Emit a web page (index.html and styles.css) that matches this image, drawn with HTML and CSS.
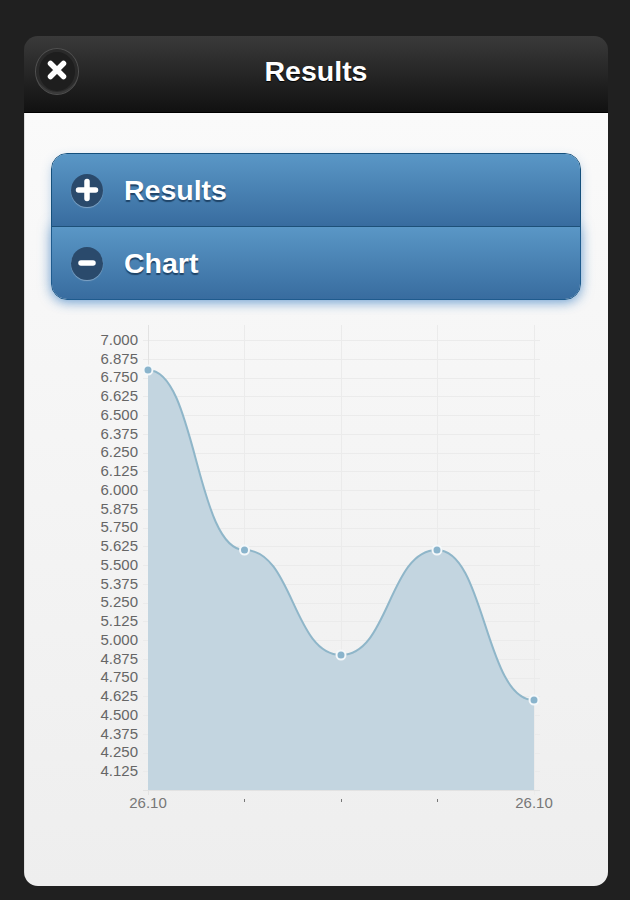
FILE: index.html
```html
<!DOCTYPE html>
<html lang="en">
<head>
  <meta charset="UTF-8" />
  <title>Results</title>
  <meta name="viewport" content="width=device-width, initial-scale=1.0" />
  <link rel="stylesheet" href="styles.css">
</head>
<body>
  <div class="dialog">
    <header class="dialog-header">
      <a class="close-btn" href="#" aria-label="Close">
        <svg class="close-icon" viewBox="0 0 24 24" width="24" height="24">
          <path d="M5.5 5.5 L18.5 18.5 M18.5 5.5 L5.5 18.5" />
        </svg>
      </a>
      <h1>Results</h1>
    </header>

    <div class="dialog-content">
      <div class="collapsible-set">
        <div class="collapsible-row">
          <span class="row-icon">
            <svg viewBox="0 0 24 24" width="24" height="24"><path d="M3.5 12 H20.5 M12 3.5 V20.5" /></svg>
          </span>
          <span class="row-title">Results</span>
        </div>
        <div class="collapsible-row">
          <span class="row-icon">
            <svg viewBox="0 0 24 24" width="24" height="24"><path d="M6 12 H18" /></svg>
          </span>
          <span class="row-title">Chart</span>
        </div>
      </div>

      <svg class="chart" viewBox="90 320 470 500" width="470" height="500">
        <g class="grid">
          <path d="M143 340.5H540 M143 359.5H540 M143 378.5H540 M143 396.5H540 M143 415.5H540 M143 434.5H540 M143 453.5H540 M143 471.5H540 M143 490.5H540 M143 509.5H540 M143 528.5H540 M143 546.5H540 M143 565.5H540 M143 584.5H540 M143 603.5H540 M143 621.5H540 M143 640.5H540 M143 659.5H540 M143 678.5H540 M143 696.5H540 M143 715.5H540 M143 734.5H540 M143 753.5H540 M143 771.5H540" />
          <path d="M244.5 325V790 M341.5 325V790 M437.5 325V790 M534.5 325V795" />
        </g>
        <path class="axis" d="M148.5 325V795 M143 790.5H540" />
        <path class="area" d="M148 370 C196 370 196 550 244.5 550 C293 550 293 655 341 655 C389 655 389 550 437 550 C485 550 485 700 534 700 V790 H148 Z" />
        <path class="line" d="M148 370 C196 370 196 550 244.5 550 C293 550 293 655 341 655 C389 655 389 550 437 550 C485 550 485 700 534 700" />
        <g class="points">
          <circle cx="148" cy="370" r="4.5" />
          <circle cx="244.5" cy="550" r="4.5" />
          <circle cx="341" cy="655" r="4.5" />
          <circle cx="437" cy="550" r="4.5" />
          <circle cx="534" cy="700" r="4.5" />
        </g>
        <g class="y-labels">
          <text x="138" y="345">7.000</text>
          <text x="138" y="364">6.875</text>
          <text x="138" y="382">6.750</text>
          <text x="138" y="401">6.625</text>
          <text x="138" y="420">6.500</text>
          <text x="138" y="439">6.375</text>
          <text x="138" y="457">6.250</text>
          <text x="138" y="476">6.125</text>
          <text x="138" y="495">6.000</text>
          <text x="138" y="514">5.875</text>
          <text x="138" y="532">5.750</text>
          <text x="138" y="551">5.625</text>
          <text x="138" y="570">5.500</text>
          <text x="138" y="589">5.375</text>
          <text x="138" y="607">5.250</text>
          <text x="138" y="626">5.125</text>
          <text x="138" y="645">5.000</text>
          <text x="138" y="664">4.875</text>
          <text x="138" y="682">4.750</text>
          <text x="138" y="701">4.625</text>
          <text x="138" y="720">4.500</text>
          <text x="138" y="739">4.375</text>
          <text x="138" y="757">4.250</text>
          <text x="138" y="776">4.125</text>
        </g>
        <g class="x-labels">
          <text x="148" y="808">26.10</text>
          <text x="534" y="808">26.10</text>
        </g>
        <path class="ticks" d="M244.5 799V802 M341.5 799V802 M437.5 799V802" />
      </svg>
    </div>
  </div>
</body>
</html>
```

FILE: styles.css
```css
* {
  box-sizing: border-box;
}
html, body {
  margin: 0;
  height: 100%;
}
body {
  font-family: "Liberation Sans", Arial, sans-serif;
  background-color: #202020;
  padding: 36px 22px 14px 24px;
  overflow: hidden;
}
.dialog {
  height: 850px;
  border-radius: 14px;
  overflow: hidden;
  display: flex;
  flex-direction: column;
}
.dialog-header {
  height: 77px;
  flex: none;
  display: flex;
  align-items: center;
  justify-content: center;
  position: relative;
  background: linear-gradient(#3a3a3a, #111);
  border-bottom: 1px solid #000;
}
.dialog-header h1 {
  margin: 0 0 5px;
  font-size: 28.5px;
  font-weight: bold;
  color: #fff;
  text-shadow: 0 1px 1px #000;
}
.close-btn {
  position: absolute;
  left: 11px;
  top: 12px;
  width: 44px;
  height: 47px;
  padding-bottom: 3px;
  border-radius: 50%;
  background: #1e1e1e;
  border: 1px solid #505050;
  box-shadow: inset 0 -3px 0 -1px #3a3a3a, inset 0 0 0 3px #2a2a2a;
  display: flex;
  align-items: center;
  justify-content: center;
}
.close-icon path {
  fill: none;
  stroke: #fff;
  stroke-width: 5.5;
  stroke-linecap: round;
}
.dialog-content {
  flex: 1;
  padding: 40px 27px 0;
  background: linear-gradient(#fafafa, #eee);
  border-left: 1px solid #ddd;
}
.collapsible-set {
  margin-left: -1px;
  width: 530px;
  border-radius: 16px;
  border: 1px solid #15507c;
  box-shadow: 0 4px 12px -2px rgba(60, 130, 200, 0.45);
}
.collapsible-row {
  height: 73px;
  display: flex;
  align-items: center;
  padding-left: 19px;
  background: linear-gradient(#5a97c6, #386c9f);
  border-bottom: 1px solid #1d5078;
}
.collapsible-row:first-child {
  position: relative;
  z-index: 1;
  border-radius: 15px 15px 0 0;
}
.collapsible-row:last-child {
  height: 72px;
  border-radius: 0 0 15px 15px;
  border-bottom: none;
  box-shadow: 0 0 14px rgba(56, 123, 190, 0.6);
}
.row-icon {
  width: 32px;
  height: 33px;
  border-radius: 50%;
  background: #2a4a6c;
  box-shadow: 0 1px 1px rgba(255, 255, 255, 0.35);
  display: flex;
  align-items: center;
  justify-content: center;
}
.row-icon path {
  fill: none;
  stroke: #fff;
  stroke-width: 5.5;
  stroke-linecap: round;
}
.row-title {
  margin-left: 21px;
  font-size: 28.5px;
  font-weight: bold;
  color: #fff;
  text-shadow: 0 2px 1px #1f4468;
}
.chart {
  display: block;
  margin: 20px 0 0 38px;
}
.grid path {
  fill: none;
  stroke: #ebebeb;
  stroke-width: 1;
}
.axis {
  fill: none;
  stroke: #e2e2e2;
  stroke-width: 1;
}
.area {
  fill: #c3d5e0;
}
.line {
  fill: none;
  stroke: #8fb6c9;
  stroke-width: 2;
}
.points circle {
  fill: #8ab4cc;
  stroke: #f4f8fa;
  stroke-width: 2;
}
.y-labels text {
  font-size: 15px;
  fill: #666;
  text-anchor: end;
}
.x-labels text {
  font-size: 15px;
  fill: #777;
  text-anchor: middle;
}
.ticks {
  stroke: #777;
  stroke-width: 1;
}
```
